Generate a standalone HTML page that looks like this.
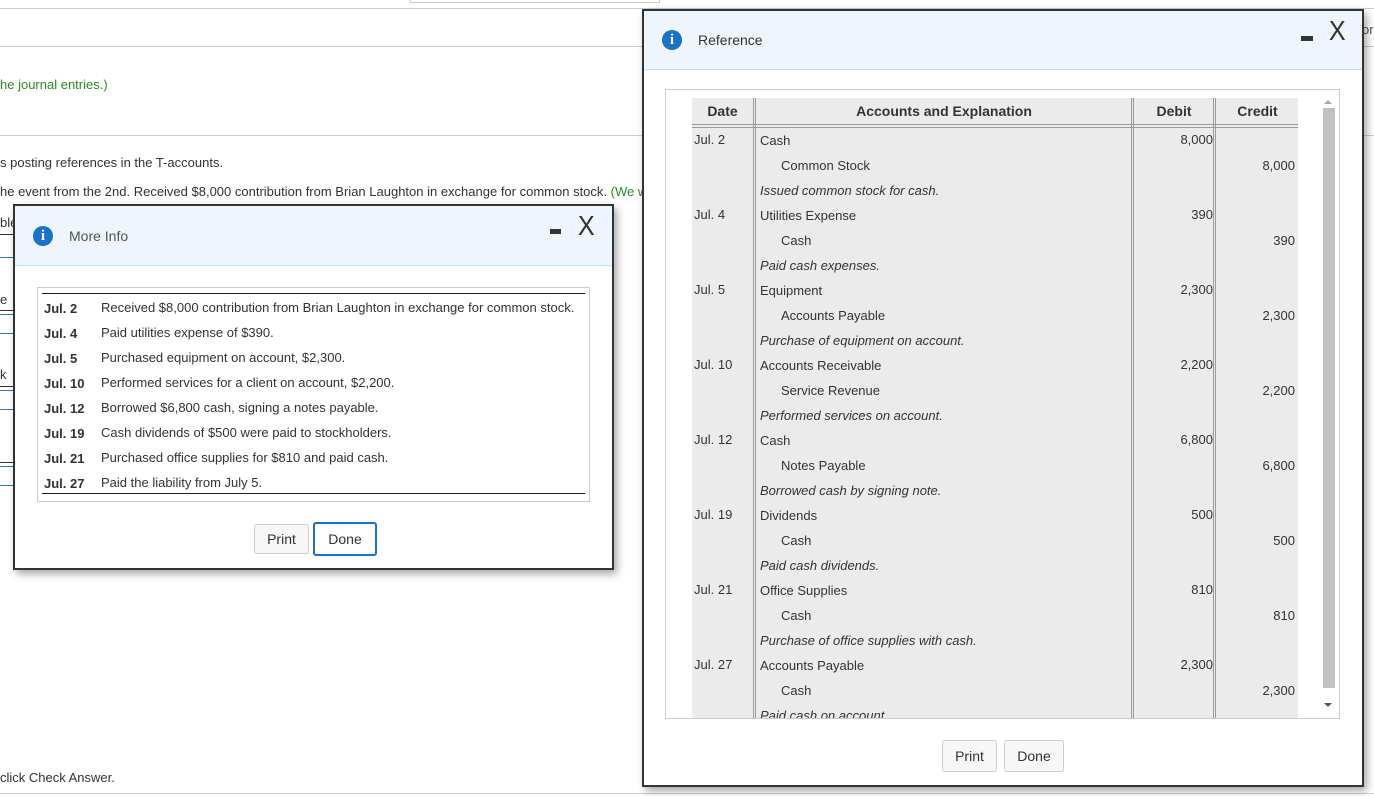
<!DOCTYPE html>
<html><head><meta charset="utf-8"><style>
*{margin:0;padding:0;box-sizing:border-box}
body{width:1374px;height:796px;overflow:hidden;background:#fff;font-family:"Liberation Sans",Arial,sans-serif;font-size:13px;color:#333;position:relative}
.a{position:absolute;white-space:nowrap}
.hl{position:absolute;height:1px;background:#ccc}
.dlg{position:absolute;border:2px solid #333;background:#fff;box-shadow:3px 4px 8px rgba(0,0,0,.35)}
.hdr{position:absolute;left:0;right:0;top:0;background:#eef5fc;border-bottom:1px solid #c5def3}
.ic{position:absolute;width:20px;height:20px;border-radius:50%;background:#1a73c8;color:#fff;font:bold 15px "Liberation Serif",serif;text-align:center;line-height:20px}
.btn{position:absolute;border:1px solid #ccc;border-radius:3px;background:#f7f7f7;text-align:center;font-size:14px;color:#333}
.tc{position:absolute;font-size:13px;color:#333}
.r{text-align:right}
.vl{position:absolute;width:3px;border-left:1px solid #999;border-right:1px solid #999}
.x{position:absolute;font-size:28px;color:#333;font-weight:normal;transform:scaleX(0.9)}
</style></head><body>
<div class="hl" style="left:0;top:8px;width:1374px"></div>
<div class="a" style="left:410px;top:0;width:250px;height:3px;border:1px solid #ccc;border-top:none"></div>
<div class="hl" style="left:0;top:46px;width:1374px"></div>
<div class="hl" style="left:0;top:135px;width:1374px"></div>
<div class="hl" style="left:0;top:793px;width:1374px"></div>
<div class="a" style="left:0;top:77px;color:#2a8a2a">he journal entries.)</div>
<div class="a" style="left:0;top:155px">s posting references in the T-accounts.</div>
<div class="a" style="left:0;top:184px">he event from the 2nd. Received $8,000 contribution from Brian Laughton in exchange for common stock. <span style="color:#2a8a2a">(We w</span></div>
<div class="a" style="left:0;top:770px">click Check Answer.</div>
<div class="a" style="left:0;top:215px">ble</div>
<div class="a" style="left:0;top:292px">e</div>
<div class="a" style="left:0;top:367px">k</div>
<div class="a" style="left:0;top:234px;width:14px;height:1px;background:#333"></div>
<div class="a" style="left:0;top:257px;width:14px;height:1px;background:#2a7f9f"></div>
<div class="a" style="left:0;top:310px;width:14px;height:1px;background:#333"></div>
<div class="a" style="left:0;top:314px;width:14px;height:1px;background:#2a7f9f"></div>
<div class="a" style="left:0;top:333px;width:14px;height:1px;background:#2a7f9f"></div>
<div class="a" style="left:0;top:386px;width:14px;height:1px;background:#333"></div>
<div class="a" style="left:0;top:390px;width:14px;height:1px;background:#2a7f9f"></div>
<div class="a" style="left:0;top:409px;width:14px;height:1px;background:#2a7f9f"></div>
<div class="a" style="left:0;top:462px;width:14px;height:1px;background:#333"></div>
<div class="a" style="left:0;top:466px;width:14px;height:1px;background:#2a7f9f"></div>
<div class="a" style="left:0;top:485px;width:14px;height:1px;background:#2a7f9f"></div>
<div class="a" style="left:1362px;top:22px;color:#555">or</div>

<!-- Reference dialog -->
<div class="dlg" style="left:642px;top:9px;width:722px;height:778px">
 <div class="hdr" style="height:59px"></div>
 <div class="ic" style="left:18px;top:19px">i</div>
 <div class="a" style="left:54px;top:21px;font-size:14px;color:#333">Reference</div>
 <div class="a" style="left:657px;top:25px;width:12px;height:5px;background:#333"></div>
 <div class="x" style="left:684px;top:4px">X</div>
 <div class="a" style="left:21px;top:78px;width:675px;height:630px;border:1px solid #ccc;overflow:hidden">
  <div class="a" style="left:26px;top:8px;width:606px;height:630px;background:#ebebeb"></div>
  <div class="a" style="left:26px;top:34px;width:606px;height:4px;border-top:1px solid #999;border-bottom:1px solid #999"></div>
  <div class="vl" style="left:87px;top:8px;height:630px"></div>
  <div class="vl" style="left:465px;top:8px;height:630px"></div>
  <div class="vl" style="left:547px;top:8px;height:630px"></div>
  <div class="tc" style="left:26px;top:13px;width:61px;text-align:center;font-weight:bold;font-size:14px">Date</div>
  <div class="tc" style="left:91px;top:13px;width:374px;text-align:center;font-weight:bold;font-size:14px">Accounts and Explanation</div>
  <div class="tc" style="left:469px;top:13px;width:78px;text-align:center;font-weight:bold;font-size:14px">Debit</div>
  <div class="tc" style="left:551px;top:13px;width:81px;text-align:center;font-weight:bold;font-size:14px">Credit</div>
  <div class="a" style="left:658px;top:10px;width:0;height:0;border:4px solid transparent;border-bottom-color:#aaa;border-top:none"></div>
  <div class="a" style="left:657px;top:18px;width:12px;height:580px;background:#c1c1c1"></div>
  <div class="a" style="left:658px;top:613px;width:0;height:0;border:4px solid transparent;border-top-color:#555;border-bottom:none"></div>
  <div id="rows"></div>
 </div>
 <div class="btn" style="left:298px;top:729px;width:55px;height:32px;line-height:30px">Print</div>
 <div class="btn" style="left:360px;top:729px;width:60px;height:32px;line-height:30px">Done</div>
</div>

<!-- More info dialog -->
<div class="dlg" style="left:13px;top:204px;width:601px;height:366px">
 <div class="hdr" style="height:60px"></div>
 <div class="ic" style="left:18px;top:20px">i</div>
 <div class="a" style="left:54px;top:22px;font-size:14px;color:#555">More Info</div>
 <div class="a" style="left:535px;top:23px;width:11px;height:5px;background:#333"></div>
 <div class="x" style="left:562px;top:4px">X</div>
 <div class="a" style="left:22px;top:81px;width:553px;height:215px;border:1px solid #ccc">
  <div class="a" style="left:4px;top:5px;width:543px;height:1px;background:#222"></div>
  <div class="a" style="left:4px;top:205px;width:543px;height:1px;background:#222"></div>
  <div id="mi"></div>
 </div>
 <div class="btn" style="left:239px;top:318px;width:55px;height:30px;line-height:28px">Print</div>
 <div class="btn" style="left:298px;top:316px;width:64px;height:34px;line-height:30px;border:2px solid #1a73c8;background:#fff">Done</div>
</div>

<script>
var R=[["Jul. 2","Cash",0,"8,000",""],["","Common Stock",1,"","8,000"],["","Issued common stock for cash.",2,"",""],
["Jul. 4","Utilities Expense",0,"390",""],["","Cash",1,"","390"],["","Paid cash expenses.",2,"",""],
["Jul. 5","Equipment",0,"2,300",""],["","Accounts Payable",1,"","2,300"],["","Purchase of equipment on account.",2,"",""],
["Jul. 10","Accounts Receivable",0,"2,200",""],["","Service Revenue",1,"","2,200"],["","Performed services on account.",2,"",""],
["Jul. 12","Cash",0,"6,800",""],["","Notes Payable",1,"","6,800"],["","Borrowed cash by signing note.",2,"",""],
["Jul. 19","Dividends",0,"500",""],["","Cash",1,"","500"],["","Paid cash dividends.",2,"",""],
["Jul. 21","Office Supplies",0,"810",""],["","Cash",1,"","810"],["","Purchase of office supplies with cash.",2,"",""],
["Jul. 27","Accounts Payable",0,"2,300",""],["","Cash",1,"","2,300"],["","Paid cash on account.",2,"",""]];
var h="";R.forEach(function(r,i){var t=43+i*25;
h+='<div class="tc" style="left:28px;top:'+(t-1)+'px">'+r[0]+'</div>';
h+='<div class="tc" style="left:'+(r[2]==1?115:94)+'px;top:'+t+'px;'+(r[2]==2?'font-style:italic':'')+'">'+r[1]+'</div>';
h+='<div class="tc r" style="left:469px;width:78px;top:'+(t-1)+'px">'+r[3]+'</div>';
h+='<div class="tc r" style="left:551px;width:78px;top:'+t+'px">'+r[4]+'</div>';});
document.getElementById("rows").innerHTML=h;
var M=[["Jul. 2","Received $8,000 contribution from Brian Laughton in exchange for common stock."],["Jul. 4","Paid utilities expense of $390."],["Jul. 5","Purchased equipment on account, $2,300."],["Jul. 10","Performed services for a client on account, $2,200."],["Jul. 12","Borrowed $6,800 cash, signing a notes payable."],["Jul. 19","Cash dividends of $500 were paid to stockholders."],["Jul. 21","Purchased office supplies for $810 and paid cash."],["Jul. 27","Paid the liability from July 5."]];
h="";M.forEach(function(m,i){var t=13+i*25;
h+='<div class="tc" style="left:6px;top:'+t+'px;font-weight:bold;color:#333">'+m[0]+'</div><div class="tc" style="left:63px;top:'+(t-1)+'px">'+m[1]+'</div>';});
document.getElementById("mi").innerHTML=h;
</script>
</body></html>
